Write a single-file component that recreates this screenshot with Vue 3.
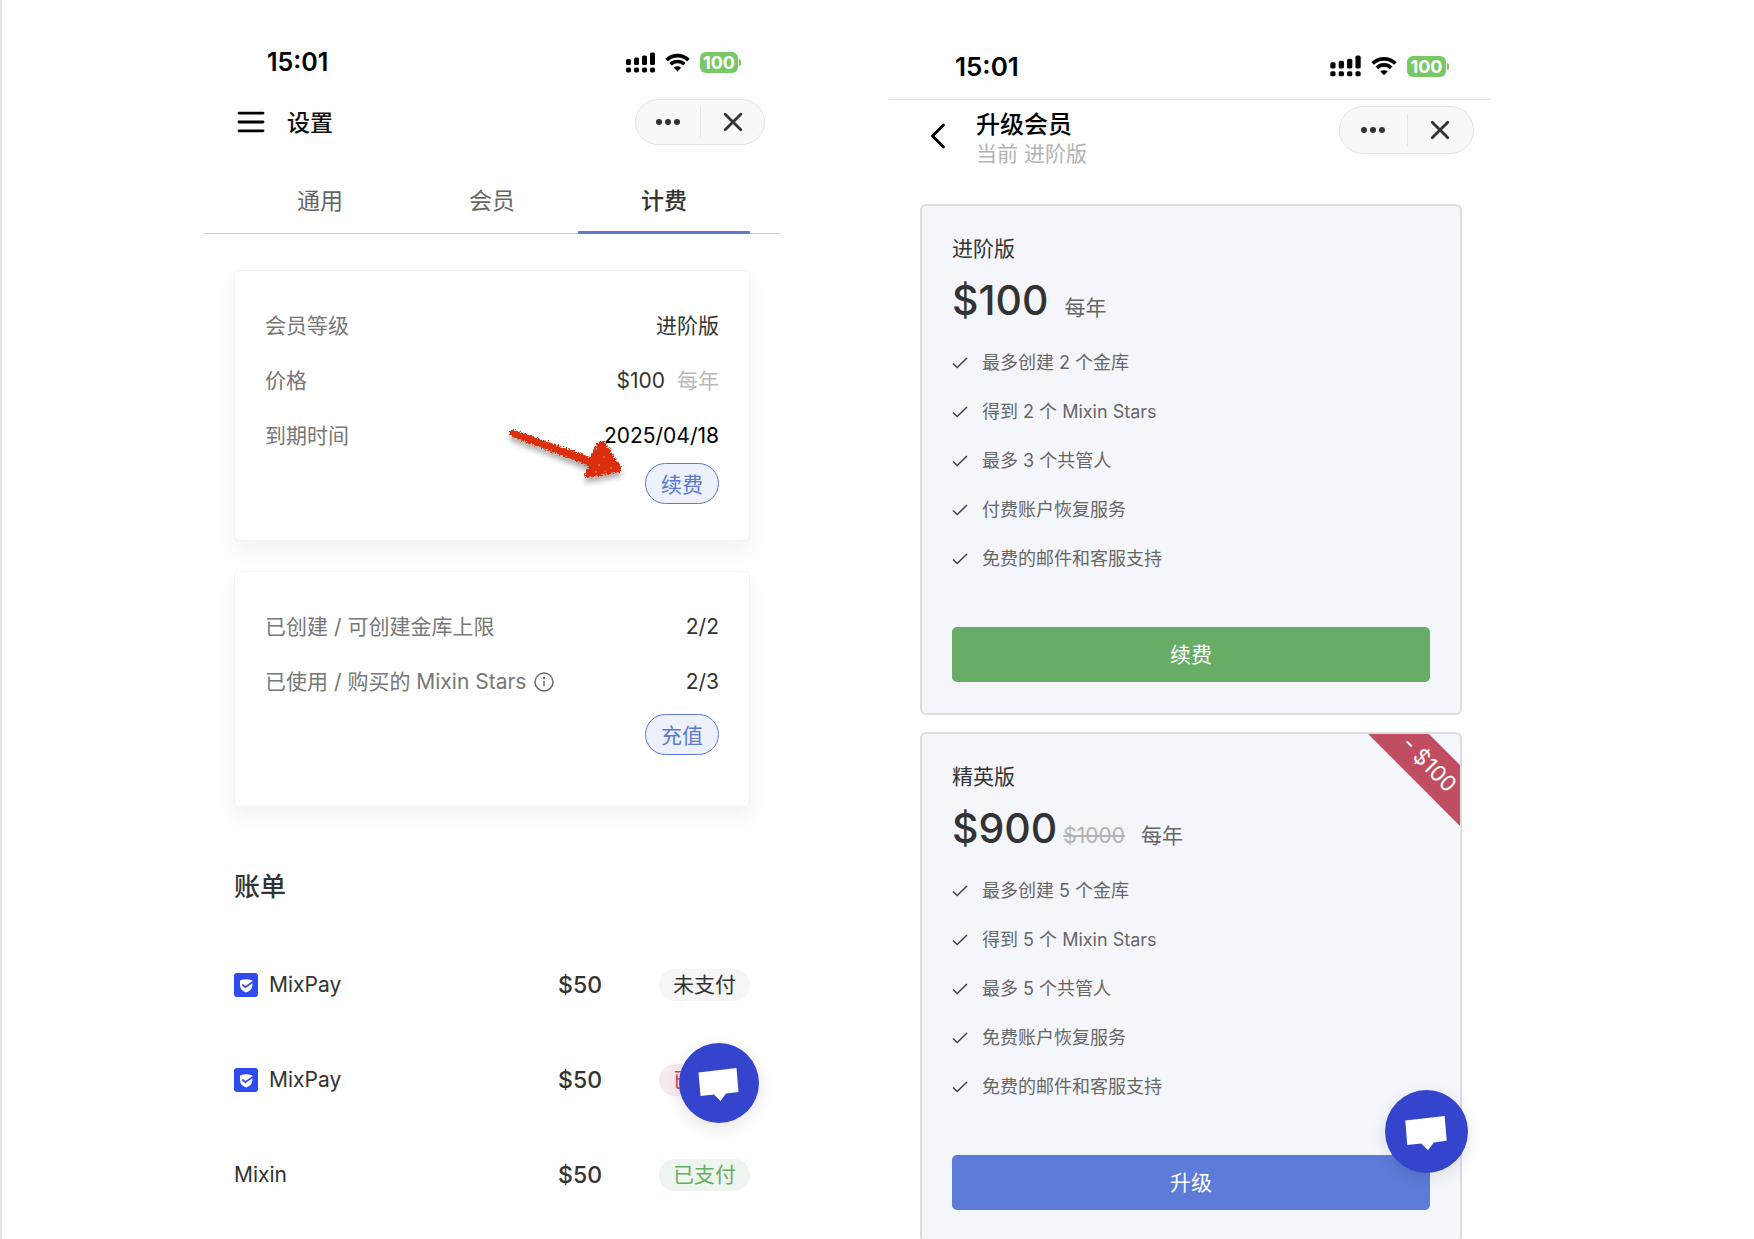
<template>
  <main class="page">
    <section class="phone settings">
      <div class="status-bar">
        <span class="time">15:01</span>
        <div class="status-icons">
          <svg class="signal" viewBox="0 0 29 21" aria-hidden="true">
            <rect v-for="(b, i) in bars" :key="'b' + i" :x="b.x" :y="b.y" width="5" :height="b.h" rx="1.6" />
            <rect v-for="(b, i) in bars" :key="'d' + i" :x="b.x" y="15.4" width="5" height="5" rx="1.6" />
          </svg>
          <svg class="wifi" viewBox="0 0 25 19" aria-hidden="true">
            <path d="M1.6 7.1a15.6 15.6 0 0 1 21.8 0M5.6 11.3a9.9 9.9 0 0 1 13.8 0" />
            <path class="solid" d="M12.5 18.4 8.9 14.8a5.2 5.2 0 0 1 7.2 0z" />
          </svg>
          <span class="battery">100</span>
        </div>
      </div>

      <header class="header">
        <button class="icon-btn" aria-label="菜单">
          <svg class="menu-icon" viewBox="0 0 28 22">
            <path d="M2 2.2h24M2 11h24M2 19.8h24" />
          </svg>
        </button>
        <h1 class="header-title">设置</h1>
        <div class="capsule">
          <button aria-label="更多">
            <svg class="dots" viewBox="0 0 24 6">
              <circle cx="3" cy="3" r="3" />
              <circle cx="12" cy="3" r="3" />
              <circle cx="21" cy="3" r="3" />
            </svg>
          </button>
          <button aria-label="关闭">
            <svg class="cross" viewBox="0 0 20 20">
              <path d="M2.2 2.2l15.6 15.6M17.8 2.2L2.2 17.8" />
            </svg>
          </button>
        </div>
      </header>

      <nav class="tabs" role="tablist">
        <button
          v-for="tab in tabs"
          :key="tab"
          role="tab"
          :aria-selected="tab === activeTab"
          :class="['tab', { active: tab === activeTab }]"
          @click="activeTab = tab"
        >
          {{ tab }}
        </button>
      </nav>

      <div class="info-card plan-card">
        <div class="info-row">
          <span class="info-label">会员等级</span>
          <span>进阶版</span>
        </div>
        <div class="info-row">
          <span class="info-label">价格</span>
          <span>$100 <span class="muted">每年</span></span>
        </div>
        <div class="info-row">
          <span class="info-label">到期时间</span>
          <span class="date">2025/04/18</span>
        </div>
        <button class="pill-btn">续费</button>
        <svg class="arrow" viewBox="0 0 130 76" aria-hidden="true">
          <defs>
            <filter id="crayon" x="-10%" y="-10%" width="120%" height="130%">
              <feTurbulence type="fractalNoise" baseFrequency="0.6" numOctaves="2" seed="4" result="noise" />
              <feDisplacementMap
                in="SourceGraphic"
                in2="noise"
                scale="6"
                xChannelSelector="R"
                yChannelSelector="G"
                result="rough"
              />
              <feDropShadow in="rough" dx="0" dy="5" stdDeviation="2.5" flood-color="#000" flood-opacity="0.3" />
            </filter>
          </defs>
          <g filter="url(#crayon)">
            <path d="M12 8 L17 8 L92 35 L101 19 L106 19 L123 45 L122 50 L89 56 L86 54 L91 44 L12 14 Z" />
          </g>
          <g class="specks">
            <circle cx="106" cy="35" r="0.7" />
            <circle cx="101" cy="43" r="0.8" />
            <circle cx="113" cy="46" r="0.7" />
            <circle cx="98" cy="50" r="0.7" />
            <circle cx="107" cy="49" r="0.6" />
          </g>
        </svg>
      </div>

      <div class="info-card quota-card">
        <div class="info-row">
          <span class="info-label">已创建 / 可创建金库上限</span>
          <span>2/2</span>
        </div>
        <div class="info-row">
          <span class="info-label">
            已使用 / 购买的 Mixin Stars
            <svg class="info-icon" viewBox="0 0 20 20" aria-hidden="true">
              <circle cx="10" cy="10" r="9" />
              <path d="M10 8.8v5.4" />
              <circle class="solid" cx="10" cy="6" r="1.2" />
            </svg>
          </span>
          <span>2/3</span>
        </div>
        <button class="pill-btn">充值</button>
      </div>

      <h2 class="bills-title">账单</h2>
      <table class="bills">
        <tbody>
          <tr v-for="(bill, i) in bills" :key="i">
            <td>
              <span class="bill-name">
                <svg v-if="bill.name === 'MixPay'" class="mixpay" viewBox="0 0 24 24" aria-hidden="true">
                  <rect width="24" height="24" rx="3" fill="#2f4bf0" />
                  <path d="M6 7.4Q12 5 18.4 7.4V12.5Q18 17.3 12.2 19.6Q6.3 17.3 6 12.5z" fill="#fff" />
                  <path d="M8.3 11.5l3 2.7 7.4-5.2" fill="none" stroke="#2f4bf0" stroke-width="1.7" />
                </svg>
                {{ bill.name }}
              </span>
            </td>
            <td class="bill-amount">{{ bill.amount }}</td>
            <td class="bill-status">
              <span :class="['badge', bill.type]">{{ bill.status }}</span>
            </td>
          </tr>
        </tbody>
      </table>

      <button class="fab" aria-label="客服">
        <svg viewBox="0 0 80 80">
          <path d="M19.500 29.500L57.500 25 59.500 49 47 50.500 41.500 58 35 51.500 21.500 53z" />
        </svg>
      </button>
    </section>

    <section class="phone upgrade">
      <div class="status-bar">
        <span class="time">15:01</span>
        <div class="status-icons">
          <svg class="signal" viewBox="0 0 29 21" aria-hidden="true">
            <rect v-for="(b, i) in bars" :key="'b' + i" :x="b.x" :y="b.y" width="5" :height="b.h" rx="1.6" />
            <rect v-for="(b, i) in bars" :key="'d' + i" :x="b.x" y="15.4" width="5" height="5" rx="1.6" />
          </svg>
          <svg class="wifi" viewBox="0 0 25 19" aria-hidden="true">
            <path d="M1.6 7.1a15.6 15.6 0 0 1 21.8 0M5.6 11.3a9.9 9.9 0 0 1 13.8 0" />
            <path class="solid" d="M12.5 18.4 8.9 14.8a5.2 5.2 0 0 1 7.2 0z" />
          </svg>
          <span class="battery">100</span>
        </div>
      </div>

      <header class="header">
        <button class="icon-btn" aria-label="返回">
          <svg class="back-icon" viewBox="0 0 16 26">
            <path d="M13.500 2L2.500 13l11 11" />
          </svg>
        </button>
        <div class="header-text">
          <h1 class="header-title">升级会员</h1>
          <p class="header-sub">当前 进阶版</p>
        </div>
        <div class="capsule">
          <button aria-label="更多">
            <svg class="dots" viewBox="0 0 24 6">
              <circle cx="3" cy="3" r="3" />
              <circle cx="12" cy="3" r="3" />
              <circle cx="21" cy="3" r="3" />
            </svg>
          </button>
          <button aria-label="关闭">
            <svg class="cross" viewBox="0 0 20 20">
              <path d="M2.2 2.2l15.6 15.6M17.8 2.2L2.2 17.8" />
            </svg>
          </button>
        </div>
      </header>

      <div class="plans">
        <article v-for="plan in plans" :key="plan.name" class="plan">
          <div v-if="plan.discount" class="ribbon">{{ plan.discount }}</div>
          <h2 class="plan-name">{{ plan.name }}</h2>
          <div class="plan-price">
            <strong>{{ plan.price }}</strong>
            <del v-if="plan.oldPrice">{{ plan.oldPrice }}</del>
            <span class="plan-unit">每年</span>
          </div>
          <ul class="features">
            <li v-for="feature in plan.features" :key="feature">
              <svg class="tick" viewBox="0 0 16 12" aria-hidden="true">
                <path d="M1 6.500l4.200 4L15 1" />
              </svg>
              {{ feature }}
            </li>
          </ul>
          <button :class="['plan-btn', plan.theme]">{{ plan.action }}</button>
        </article>
      </div>

      <button class="fab" aria-label="客服">
        <svg viewBox="0 0 80 80">
          <path d="M19.500 29.500L57.500 25 59.500 49 47 50.500 41.500 58 35 51.500 21.500 53z" />
        </svg>
      </button>
    </section>
  </main>
</template>

<script setup>
import { ref } from 'vue'

const tabs = ['通用', '会员', '计费']
const activeTab = ref('计费')

const bars = [
  { x: 0, y: 7, h: 6 },
  { x: 8, y: 5.5, h: 7.5 },
  { x: 16, y: 3.5, h: 9.5 },
  { x: 24, y: 0.5, h: 12.5 }
]

const bills = [
  { name: 'MixPay', amount: '$50', status: '未支付', type: 'unpaid' },
  { name: 'MixPay', amount: '$50', status: '已过期', type: 'expired' },
  { name: 'Mixin', amount: '$50', status: '已支付', type: 'paid' }
]

const plans = [
  {
    name: '进阶版',
    price: '$100',
    action: '续费',
    theme: 'green',
    features: ['最多创建 2 个金库', '得到 2 个 Mixin Stars', '最多 3 个共管人', '付费账户恢复服务', '免费的邮件和客服支持']
  },
  {
    name: '精英版',
    price: '$900',
    oldPrice: '$1000',
    discount: '- $100',
    action: '升级',
    theme: 'blue',
    features: ['最多创建 5 个金库', '得到 5 个 Mixin Stars', '最多 5 个共管人', '免费账户恢复服务', '免费的邮件和客服支持']
  }
]
</script>

<style>
body {
  background: #fefefe;
}
</style>

<style scoped>
.page {
  display: grid;
  grid-template-columns: 202fr 576fr 109fr 601fr 264fr;
  min-height: 100vh;
  box-sizing: border-box;
  border-left: 2px solid #e6e6e6;
  font-family: Inter, 'Noto Sans CJK SC', sans-serif;
  font-size: 21px;
  color: #333;
  overflow: hidden;
}

h1,
h2,
p,
ul {
  margin: 0;
  padding: 0;
  font-weight: 500;
}

button {
  padding: 0;
  border: none;
  background: none;
  font: inherit;
  color: inherit;
  cursor: pointer;
}

svg {
  display: block;
}

.phone {
  position: relative;
}

.settings {
  grid-column: 2;
}

.upgrade {
  grid-column: 4;
}

/* status bar */
.status-bar {
  display: flex;
  align-items: center;
  justify-content: space-between;
  height: 44px;
  padding: 40px 39px 0 63px;
}

.upgrade .status-bar {
  padding: 44px 41px 11px 66px;
  border-bottom: 1px solid #e2e2e2;
}

.time {
  font-size: 25px;
  font-weight: 600;
  color: #000;
}

.upgrade .time {
  font-size: 26px;
}

.status-icons {
  display: flex;
  align-items: center;
  gap: 10px;
}

.signal {
  width: 29px;
  height: 21px;
}

.wifi {
  width: 25px;
  height: 19px;
  fill: none;
  stroke: #000;
  stroke-width: 3.6;
}

.upgrade .signal {
  width: 31px;
  height: 22px;
}

.upgrade .wifi {
  width: 26px;
  height: 20px;
}

.wifi .solid {
  fill: #000;
  stroke: none;
}

.battery {
  position: relative;
  width: 38px;
  margin-right: 3px;
  border-radius: 6px;
  background: #78c865;
  color: #fff;
  font-size: 18px;
  font-weight: 700;
  line-height: 21px;
  text-align: center;
}

.upgrade .battery {
  width: 39px;
}

.battery::after {
  content: '';
  position: absolute;
  left: 100%;
  top: 7px;
  width: 2px;
  height: 7px;
  margin-left: 1px;
  border-radius: 0 3px 3px 0;
  background: #78c865;
}

/* header */
.header {
  display: flex;
  align-items: center;
  margin-top: 15px;
  padding: 0 15px 0 33px;
}

.upgrade .header {
  margin-top: 6px;
  padding: 0 16px 0 41px;
}

.menu-icon {
  width: 28px;
  height: 22px;
}

.back-icon {
  width: 16px;
  height: 26px;
}

.menu-icon,
.back-icon {
  fill: none;
  stroke: #000;
  stroke-width: 2.8;
  stroke-linecap: round;
  stroke-linejoin: round;
}

.header-title {
  margin-left: 22px;
  padding-bottom: 2px;
  font-size: 23px;
  color: #111;
}

.header-text {
  padding-top: 3px;
  margin-left: 30px;
}

.upgrade .header-title {
  margin-left: 0;
  padding-bottom: 0;
  font-size: 24px;
  line-height: 32px;
  color: #000;
}

.header-sub {
  font-weight: 400;
  line-height: 25px;
  color: #b3b3b3;
}

.capsule {
  display: grid;
  grid-template-columns: 1fr 1fr;
  align-self: flex-start;
  box-sizing: border-box;
  width: 130px;
  height: 46px;
  margin-left: auto;
  padding: 7px 0;
  border: 1px solid #e4e4e4;
  border-radius: 24px;
  background: #f8f8f8;
}

.upgrade .capsule {
  width: 135px;
  height: 48px;
}

.capsule button {
  display: grid;
  place-items: center;
}

.capsule button + button {
  border-left: 1px solid #e4e4e4;
}

.dots {
  width: 24px;
  height: 6px;
  fill: #333;
}

.cross {
  width: 20px;
  height: 20px;
  stroke: #333;
  stroke-width: 2.8;
  stroke-linecap: round;
}

/* tabs */
.tabs {
  display: grid;
  grid-template-columns: repeat(3, 1fr);
  margin-top: 23px;
  padding: 0 30px;
  border-bottom: 1px solid #d0d0d0;
}

.tab {
  position: relative;
  height: 65px;
  padding-bottom: 3px;
  font-size: 23px;
  color: #666;
}

.tab.active {
  font-weight: 500;
  color: #333;
}

.tab.active::after {
  content: '';
  position: absolute;
  left: 0;
  right: 0;
  bottom: -1px;
  height: 3px;
  background: #5b78d5;
}

/* info cards */
.info-card {
  position: relative;
  display: flex;
  flex-direction: column;
  margin: 36px 30px 0;
  padding: 27px 30px 36px;
  border: 1px solid #f3f3f4;
  border-radius: 5px;
  background: #fff;
  box-shadow: 0 10px 20px rgba(0, 0, 0, 0.05);
}

.quota-card {
  margin-top: 30px;
  padding-bottom: 51px;
}

.info-row {
  display: flex;
  justify-content: space-between;
  line-height: 55px;
}

.info-label {
  display: flex;
  align-items: center;
  gap: 8px;
  color: #777;
}

.muted {
  margin-left: 6px;
  color: #bbb;
}

.date {
  color: #000;
}

.pill-btn {
  align-self: flex-end;
  box-sizing: border-box;
  width: 74px;
  height: 41px;
  padding-bottom: 2px;
  border: 1px solid #5b78d5;
  border-radius: 21px;
  background: #edf1fb;
  color: #5b78d5;
}

.quota-card .pill-btn {
  margin-top: 5px;
}

.info-icon {
  width: 20px;
  height: 20px;
  fill: none;
  stroke: #666;
  stroke-width: 1.4;
}

.info-icon .solid {
  fill: #666;
  stroke: none;
}

.arrow {
  position: absolute;
  right: 121px;
  top: 151px;
  width: 130px;
  height: 76px;
  fill: #da2f0c;
  overflow: visible;
}

.arrow .specks {
  fill: #f9c4b8;
}

/* bills */
.bills-title {
  margin: 60px 30px 30px;
  font-size: 26px;
  line-height: 40px;
}

.bills {
  width: calc(100% - 60px);
  margin: 0 30px;
  border-collapse: collapse;
}

.bills td {
  height: 95px;
  padding: 0;
}

.bill-name {
  display: flex;
  align-items: center;
  gap: 11px;
}

.mixpay {
  width: 24px;
  height: 24px;
}

.bill-amount {
  font-size: 23px;
  font-weight: 500;
  text-align: right;
}

.bill-status {
  width: 148px;
  text-align: right;
}

.badge {
  display: inline-block;
  width: 91px;
  border-radius: 16px;
  line-height: 32px;
  text-align: center;
}

.unpaid {
  background: #f6f6f6;
}

.expired {
  background: #f7eaee;
  color: #d0425c;
}

.paid {
  background: #edf5ee;
  color: #68ad66;
}

/* plans */
.plans {
  display: flex;
  flex-direction: column;
  gap: 17px;
  margin: 38px 28px 0 31px;
}

.plan {
  position: relative;
  padding: 28px 30px 31px;
  border: 2px solid #dcdddf;
  border-radius: 6px;
  background: #f5f6fb;
  overflow: hidden;
}

.plan-name {
  font-size: 21px;
  font-weight: 400;
  line-height: 30px;
}

.plan-price {
  display: flex;
  align-items: baseline;
  gap: 6px;
  margin-top: 12px;
  line-height: 48px;
}

.plan-price strong {
  font-size: 41px;
  font-weight: 500;
}

.plan-price del {
  color: #b3b3b3;
}

.plan-unit {
  margin-left: 10px;
  color: #666;
}

.features {
  margin-top: 6px;
  list-style: none;
}

.features li {
  display: flex;
  align-items: center;
  gap: 14px;
  font-size: 18px;
  font-weight: 400;
  line-height: 49px;
  color: #666;
}

.tick {
  width: 16px;
  height: 12px;
  fill: none;
  stroke: #444;
  stroke-width: 1.6;
}

.plan-btn {
  width: 100%;
  height: 55px;
  margin-top: 44px;
  padding-bottom: 3px;
  border-radius: 5px;
  color: #fff;
}

.green {
  background: #68ad66;
}

.blue {
  background: #5d7bd9;
}

.ribbon {
  position: absolute;
  top: 9px;
  right: -49px;
  width: 160px;
  background: #c04d62;
  color: #fff;
  font-size: 22px;
  line-height: 43px;
  text-align: center;
  transform: rotate(45deg);
}

/* floating chat button */
.fab {
  position: absolute;
  right: 21px;
  bottom: 120px;
  width: 80px;
  height: 80px;
  border-radius: 50%;
  background: #3544cc;
  box-shadow: 0 5px 16px rgba(0, 0, 0, 0.1);
}

.fab svg {
  width: 100%;
  height: 100%;
  fill: #fff;
}

.upgrade .fab {
  right: 22px;
  bottom: 70px;
  width: 83px;
  height: 83px;
}
</style>
